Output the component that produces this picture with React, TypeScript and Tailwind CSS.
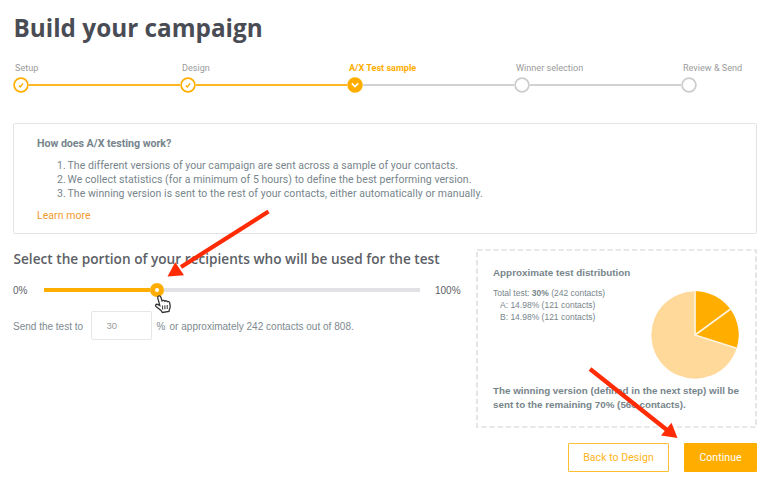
import React from "react";

type StepState = "done" | "current" | "todo";

const steps: { label: string; state: StepState }[] = [
  { label: "Setup", state: "done" },
  { label: "Design", state: "done" },
  { label: "A/X Test sample", state: "current" },
  { label: "Winner selection", state: "todo" },
  { label: "Review & Send", state: "todo" },
];

function StepDot({ state }: { state: StepState }) {
  return (
    <svg className="block h-4 w-4 shrink-0" viewBox="0 0 16 16" fill="none">
      <circle
        cx="8"
        cy="8"
        r="6.9"
        fill={state === "current" ? "#ffae00" : "#ffffff"}
        stroke={state === "todo" ? "#cccccc" : "#ffae00"}
        strokeWidth="1.7"
      />
      {state === "done" && <path d="M5.9 8.6 7.3 9.9 10.1 6.4" stroke="#ffae00" strokeWidth="1.4" />}
      {state === "current" && <path d="m4.8 6.4 3.2 3.2 3.2-3.2" stroke="#ffffff" strokeWidth="1.6" />}
    </svg>
  );
}

function Stepper() {
  return (
    <ol className="flex pl-[13px] pt-[15px] font-['Roboto',sans-serif]">
      {steps.map((step, i) => (
        <li key={step.label} className={i === 4 ? "w-[75px]" : "w-[167px]"}>
          <div
            className={
              step.state === "current"
                ? "h-[19px] whitespace-nowrap pl-[2px] text-[9.1px] leading-5 font-bold text-[#ffae00]"
                : "h-[19px] whitespace-nowrap pl-[2px] text-[9.1px] leading-5 text-[#9b9b9b]"
            }
          >
            {step.label}
          </div>
          <div className="flex items-center">
            <StepDot state={step.state} />
            {i < 4 && (
              <div className={i < 2 ? "h-[2px] grow bg-[#ffb726]" : "h-[2px] grow bg-[#d2d2d2]"} />
            )}
          </div>
        </li>
      ))}
    </ol>
  );
}

function InfoCard() {
  return (
    <section className="ml-[13px] mt-[30px] h-[111px] w-[744px] rounded-[2px] border border-[#e4e4e7] pl-[23px] pt-[12px] font-['Roboto',sans-serif] text-[10.5px] text-[#77858b]">
      <h2 className="h-[22.5px] text-[10.7px] leading-4 font-bold tracking-[-0.05px]">How does A/X testing work?</h2>
      <ol className="pl-[20px] leading-[14.4px] tracking-[0.05px]">
        <li><span className="inline-block w-[10.5px]">1.</span>The different versions of your campaign are sent across a sample of your contacts.</li>
        <li><span className="inline-block w-[10.5px]">2.</span>We collect statistics (for a minimum of 5 hours) to define the best performing version.</li>
        <li><span className="inline-block w-[10.5px]">3.</span>The winning version is sent to the rest of your contacts, either automatically or manually.</li>
      </ol>
      <a className="mt-[6.5px] block leading-4 tracking-[0.05px] text-[#f29a2e]">Learn more</a>
    </section>
  );
}

function SamplePicker() {
  return (
    <section className="w-[463px] pl-[13px] font-['Liberation_Sans',sans-serif]">
      <h2 className="h-5 whitespace-nowrap pl-[0.5px] font-['Open_Sans',sans-serif] text-[13.65px] leading-5 font-semibold text-[#5c5f66]">
        Select the portion of your recipients who will be used for the test
      </h2>
      <div className="mt-[13px] flex h-4 items-center text-[10px] text-[#5c5f66]">
        <span className="w-[31px]">0%</span>
        <div className="flex w-[376px] items-center">
          <div className="h-[4px] w-[106px] bg-[#ffae00]" />
          <div className="flex h-[14px] w-[14px] items-center justify-center rounded-full bg-[#ffae00]">
            <div className="h-[4px] w-[4px] rounded-full bg-white" />
          </div>
          <div className="h-[4px] grow bg-[#e1e1e6]" />
        </div>
        <span className="pl-[15px]">100%</span>
      </div>
      <div className="mt-[13px] flex h-[29px] items-center whitespace-nowrap text-[10px] text-[#7d898f]">
        <span className="w-[78px] pt-px">Send the test to</span>
        <div className="flex h-[29px] w-[61px] items-center rounded-[2px] border border-[#e6e6ea] pl-[14.5px] pt-px text-[9.5px] text-[#9b9b9b]">30</div>
        <span className="w-[17.5px] pl-[4.5px] pt-px">%</span>
        <span className="pt-px tracking-[0.02px]">or approximately 242 contacts out of 808.</span>
      </div>
    </section>
  );
}

function Pie() {
  return (
    <svg className="block h-[88px] w-[88px]" viewBox="-44 -44 88 88">
      <circle r="43.7" fill="#ffd999" />
      <path d="M0 0V-43.7A43.7 43.7 0 0 1 35.3-25.7Z" fill="#ffae00" />
      <path d="M0 0 35.3-25.7A43.7 43.7 0 0 1 41.6 13.3Z" fill="#ffae00" />
      <path d="M0-43.7V0L35.3-25.7M0 0 41.6 13.3" fill="none" stroke="#fff3dc" strokeWidth="1.7" />
    </svg>
  );
}

function Distribution() {
  return (
    <section className="relative ml-[13px] h-[179px] w-[281px] px-[17px] pt-[16px] font-['Liberation_Sans',sans-serif] text-[#77858b]">
      <svg className="absolute inset-0 h-full w-full" viewBox="0 0 281 179" fill="none">
        <rect x="1" y="1" width="279" height="177" stroke="#e1e1e5" strokeWidth="1.7" strokeDasharray="5.4 2.75" />
      </svg>
      <h3 className="h-4 text-[9.85px] leading-4 font-bold">Approximate test distribution</h3>
      <div className="flex h-[98px] justify-between">
        <div className="whitespace-nowrap pt-[7px] text-[8.5px] leading-[11.9px]">
          <p>Total test: <b>30%</b> (242 contacts)</p>
          <p className="pl-[7px]">A: 14.98% (121 contacts)</p>
          <p className="pl-[7px]">B: 14.98% (121 contacts)</p>
        </div>
        <div className="pr-[0.7px] pt-[10px]"><Pie /></div>
      </div>
      <p className="pt-[5px] whitespace-nowrap text-[9.8px] leading-[13.5px] font-bold">
        The winning version (defined in the next step) will be<br />
        sent to the remaining 70% (566 contacts).
      </p>
    </section>
  );
}

function Pointers() {
  return (
    <svg className="pointer-events-none absolute inset-0 h-[486px] w-[768px]" viewBox="0 0 768 486" fill="none">
      <path d="M268.5 211.5 181 267" stroke="#ff2b05" strokeWidth="4.2" />
      <path d="M167.5 276.5 175.2 262.2 184 275.3Z" fill="#ff2b05" />
      <path d="M590 369 667 430" stroke="#ff2b05" strokeWidth="4.2" />
      <path d="M677.5 438 671.5 422.7 661 435.5Z" fill="#ff2b05" />
      <path
        d="M158.2 296.2C159.3 295.5 160.5 296 160.9 297.2L162.1 300.9C162.9 300 164.2 300.2 164.8 301.2C165.7 300.4 167 300.7 167.4 301.7C168.5 301.2 169.5 301.8 169.7 302.9L170.1 305.4C170.4 307.4 169.9 308.7 169.3 309.8L169 311.5L162.4 312.5L161 310.4L156 306.5C154.9 305.5 156 303.8 157.5 304.4L159.8 305.6L157.8 298.2C157.6 297.3 157.7 296.6 158.2 296.2Z"
        fill="#fff"
        stroke="#333"
        strokeWidth="1.3"
      />
      <path d="M162.6 305.5v4M164.9 305.3v4M167.2 305v4" stroke="#333" strokeWidth="1" />
    </svg>
  );
}

export default function App() {
  return (
    <main className="relative h-[486px] w-[768px] overflow-hidden bg-white">
      <h1 className="h-[43px] pl-[13.5px] pt-[12px] font-['Open_Sans',sans-serif] text-[24.3px] leading-8 font-bold text-[#494c54]">
        Build your campaign
      </h1>
      <Stepper />
      <InfoCard />
      <div className="flex pt-[15px]">
        <SamplePicker />
        <Distribution />
      </div>
      <div className="flex justify-end gap-[15px] pr-[11px] pt-[15px] font-['Roboto',sans-serif] text-[10.5px] tracking-[0.055px]">
        <button className="h-[29px] w-[101px] rounded-[1px] border border-[#ffbe33] text-[#ffb41a]">Back to Design</button>
        <button className="h-[29px] w-[73px] rounded-[1px] bg-[#ffae00] text-white">Continue</button>
      </div>
      <Pointers />
    </main>
  );
}
